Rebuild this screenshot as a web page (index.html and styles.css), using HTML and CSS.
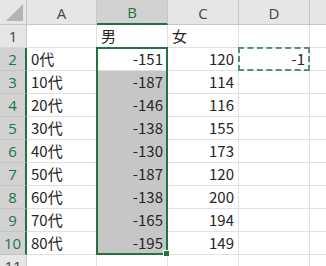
FILE: index.html
```html
<!DOCTYPE html>
<html lang="ja">
<head>
<meta charset="utf-8">
<link rel="stylesheet" href="styles.css">
</head>
<body>
<div class="sheet">
  <div class="corner"><span class="tri"></span></div>
  <div class="ch">A</div>
  <div class="ch sel">B</div>
  <div class="ch">C</div>
  <div class="ch">D</div>
  <div class="ch last"></div>

  <div class="rh">1</div>
  <div class="c"></div><div class="c">男</div><div class="c">女</div><div class="c"></div><div class="c last"></div>

  <div class="rh sel">2</div>
  <div class="c">0代</div><div class="c n act">-151</div><div class="c n">120</div><div class="c n">-1</div><div class="c last"></div>

  <div class="rh sel">3</div>
  <div class="c">10代</div><div class="c n hl">-187</div><div class="c n">114</div><div class="c"></div><div class="c last"></div>

  <div class="rh sel">4</div>
  <div class="c">20代</div><div class="c n hl">-146</div><div class="c n">116</div><div class="c"></div><div class="c last"></div>

  <div class="rh sel">5</div>
  <div class="c">30代</div><div class="c n hl">-138</div><div class="c n">155</div><div class="c"></div><div class="c last"></div>

  <div class="rh sel">6</div>
  <div class="c">40代</div><div class="c n hl">-130</div><div class="c n">173</div><div class="c"></div><div class="c last"></div>

  <div class="rh sel">7</div>
  <div class="c">50代</div><div class="c n hl">-187</div><div class="c n">120</div><div class="c"></div><div class="c last"></div>

  <div class="rh sel">8</div>
  <div class="c">60代</div><div class="c n hl">-138</div><div class="c n">200</div><div class="c"></div><div class="c last"></div>

  <div class="rh sel">9</div>
  <div class="c">70代</div><div class="c n hl">-165</div><div class="c n">194</div><div class="c"></div><div class="c last"></div>

  <div class="rh sel">10</div>
  <div class="c">80代</div><div class="c n hl">-195</div><div class="c n">149</div><div class="c"></div><div class="c last"></div>

  <div class="rh">11</div>
  <div class="c"></div><div class="c"></div><div class="c"></div><div class="c"></div><div class="c last"></div>

  <div class="selection"><span class="handle"></span></div>
  <div class="marquee"></div>
</div>
</body>
</html>
```

FILE: styles.css
```css
html, body {
  margin: 0;
  padding: 0;
  background: #ffffff;
}

.sheet {
  position: relative;
  display: grid;
  grid-template-columns: 27px 70px 71px 71px 71px 1fr;
  grid-template-rows: 25px repeat(11, 23px);
  width: 326px;
  height: 266px;
  overflow: hidden;
  font-family: "Noto Sans CJK JP", "Noto Sans", sans-serif;
  font-size: 15px;
  color: #262626;
}

.sheet > div {
  box-sizing: border-box;
}

.corner {
  background: #e6e6e6;
  border-right: 1px solid #c8c8c8;
  border-bottom: 1px solid #c8c8c8;
  position: relative;
}

.tri {
  position: absolute;
  right: 3px;
  bottom: 3px;
  width: 0;
  height: 0;
  border-left: 17px solid transparent;
  border-bottom: 17px solid #b4b4b4;
}

.ch {
  background: #e6e6e6;
  border-right: 1px solid #c8c8c8;
  border-bottom: 1px solid #c8c8c8;
  display: flex;
  align-items: center;
  justify-content: center;
  font-family: "Open Sans", "Noto Sans", sans-serif;
  font-size: 15px;
  color: #444444;
  padding-top: 1px;
}

.ch.sel {
  background: #d2d2d2;
  color: #217346;
  border-bottom: 2px solid #217346;
}

.ch.last {
  border-right: none;
}

.rh {
  background: #e6e6e6;
  border-right: 1px solid #c8c8c8;
  border-bottom: 1px solid #d8d8d8;
  display: flex;
  align-items: center;
  justify-content: center;
  font-family: "Open Sans", "Noto Sans", sans-serif;
  font-size: 15px;
  color: #444444;
}

.rh.sel {
  background: #d2d2d2;
  color: #217346;
  border-right: 2px solid #217346;
  border-bottom-color: #c4c4c4;
}

.c {
  border-right: 1px solid #e1e1e1;
  border-bottom: 1px solid #e1e1e1;
  display: flex;
  align-items: flex-end;
  padding: 0 4px 1px 4px;
  line-height: 20px;
  white-space: nowrap;
}

.c.n {
  justify-content: flex-end;
}

.c.hl {
  background: #c6c6c6;
  border-bottom-color: #c6c6c6;
}

.c.last {
  border-right: none;
}

.selection {
  position: absolute;
  grid-column: 3 / 4;
  grid-row: 3 / 12;
  top: -1px;
  left: -1px;
  right: 0;
  bottom: 0;
  border: 2px solid #217346;
  pointer-events: none;
}

.handle {
  position: absolute;
  right: -4px;
  bottom: -4px;
  width: 5px;
  height: 5px;
  background: #217346;
  border: 1px solid #ffffff;
}

.marquee {
  position: absolute;
  grid-column: 5 / 6;
  grid-row: 3 / 4;
  top: -1px;
  left: -1px;
  right: 0;
  bottom: 0;
  border: 2px dashed #217346;
  opacity: 0.75;
  pointer-events: none;
}
```
